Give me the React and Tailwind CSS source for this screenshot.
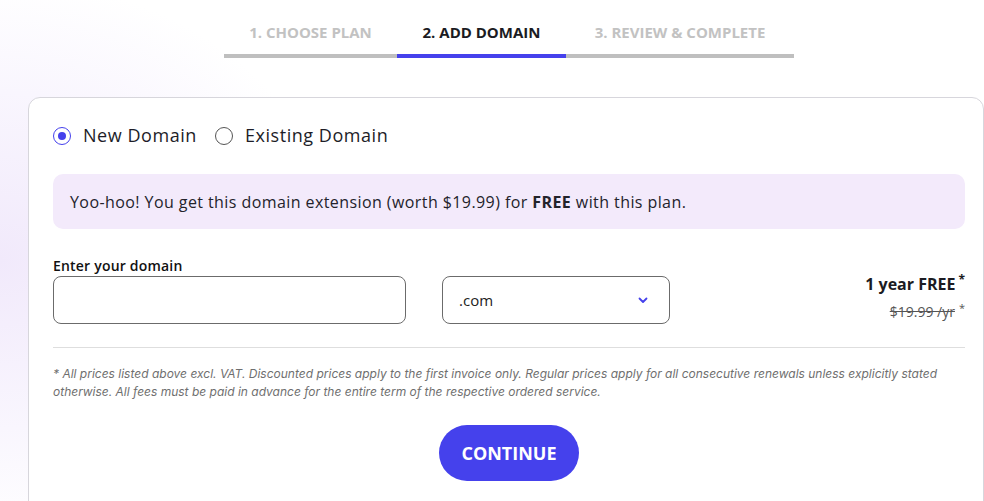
import React from "react";

const font = { fontFamily: "'Open Sans', 'Noto Sans', sans-serif" };

function Radio({ checked, label }) {
  return (
    <label className="flex items-center gap-[12px] cursor-pointer">
      <span
        className={`flex h-[18px] w-[18px] items-center justify-center rounded-full border-[1.5px] ${
          checked ? "border-[#4541ec]" : "border-[#555]"
        }`}
      >
        {checked && <span className="h-[8px] w-[8px] rounded-full bg-[#4541ec]" />}
      </span>
      <span className="text-[18px] tracking-[0.55px] text-[#1d1d28]">{label}</span>
    </label>
  );
}

export default function App() {
  return (
    <div
      className="min-h-[501px] w-full overflow-hidden bg-[radial-gradient(ellipse_340px_280px_at_0px_260px,#f1e9fb_0%,#f9f6fe_60%,#ffffff_100%)]"
      style={font}
    >
      {/* steps */}
      <div className="flex justify-center pt-[21px]">
        <div className="ml-[34px] flex">
          <div className="flex w-[173px] flex-col items-center">
            <span className="h-[22px] text-[15px] font-bold uppercase leading-[22px] text-[#c2c2c2]">
              1. Choose Plan
            </span>
            <span className="mt-[11px] h-[4px] w-full bg-[#bfbfbf]" />
          </div>
          <div className="flex w-[169px] flex-col items-center">
            <span className="h-[22px] text-[15px] font-bold uppercase leading-[22px] text-[#1b1b22]">
              2. Add Domain
            </span>
            <span className="mt-[11px] h-[4px] w-full bg-[#4541ec]" />
          </div>
          <div className="flex w-[228px] flex-col items-center">
            <span className="h-[22px] text-[15px] font-bold uppercase leading-[22px] text-[#c2c2c2]">
              3. Review &amp; Complete
            </span>
            <span className="mt-[11px] h-[4px] w-full bg-[#bfbfbf]" />
          </div>
        </div>
      </div>

      {/* card */}
      <div className="ml-[28px] mt-[39px] rounded-[12px] border border-[#d7d6dc] bg-white px-[24px] pb-[40px] pt-[24px]">
        <div className="flex items-center gap-[18px]">
          <Radio checked label="New Domain" />
          <Radio label="Existing Domain" />
        </div>

        <div className="mt-[25px] mr-[-6px] flex h-[55px] items-center rounded-[10px] bg-[#f3eafb] px-[17px] text-[16px] tracking-[0.42px] text-[#23232b]">
          <span>
            Yoo-hoo! You get this domain extension (worth $19.99) for <b className="font-bold">FREE</b> with this
            plan.
          </span>
        </div>

        <div className="mt-[27px] flex items-start">
          <div className="flex w-[353px] flex-col">
            <span className="text-[14px] font-semibold leading-[19px] tracking-[0.2px] text-[#111]">
              Enter your domain
            </span>
            <input
              className="mt-[1px] h-[48px] w-full rounded-[8px] border border-[#6b6b6b] px-[14px] text-[15px] outline-none"
              type="text"
            />
          </div>
          <div className="ml-[36px] mt-[20px] flex h-[48px] w-[228px] items-center justify-between rounded-[8px] border border-[#6b6b6b] pl-[16px] pr-[21px]">
            <span className="text-[15px] text-[#222]">.com</span>
            <svg width="10" height="7" viewBox="0 0 10 7" fill="none">
              <path
                d="M1.5 1.5 L5 5 L8.5 1.5"
                stroke="#4541ec"
                strokeWidth="1.8"
                strokeLinecap="round"
                strokeLinejoin="round"
              />
            </svg>
          </div>
          <div className="ml-auto mr-[-6px] mt-[17px] flex flex-col items-end">
            <span className="text-[16px] font-bold leading-[22px] text-[#1b1b22]">
              1 year FREE<sup className="ml-[3px] text-[12px] font-bold">*</sup>
            </span>
            <span className="mt-[7px] text-[14px] leading-[20px] text-[#555]">
              <span className="line-through">$19.99 /yr</span>
              <sup className="ml-[4px] text-[11px]">*</sup>
            </span>
          </div>
        </div>

        <div className="mt-[23px] mr-[-6px] h-px bg-[#dedede]" />

        <p
          className="mt-[17px] pr-[10px] text-[12px] italic leading-[18px] text-[#6f6f6f]"
          style={{ fontFamily: "Inter, 'Liberation Sans', sans-serif" }}
        >
          * All prices listed above excl. VAT. Discounted prices apply to the first invoice only. Regular prices apply
          for all consecutive renewals unless explicitly stated otherwise. All fees must be paid in advance for the
          entire term of the respective ordered service.
        </p>

        <div className="mt-[24px] flex justify-center pl-[6px]">
          <button className="h-[56px] w-[140px] rounded-full bg-[#4541ec] text-[18px] font-bold text-white">
            CONTINUE
          </button>
        </div>
      </div>
    </div>
  );
}
